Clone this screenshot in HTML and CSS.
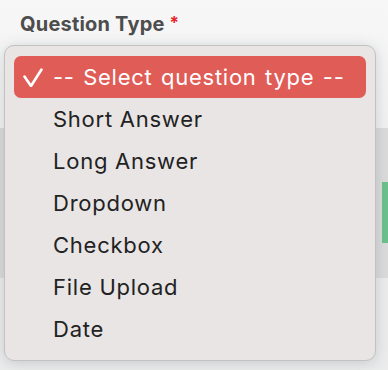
FILE: index.html
```html
<!DOCTYPE html>
<html lang="en">
<head>
  <meta charset="UTF-8" />
  <meta name="viewport" content="width=device-width, initial-scale=1.0" />
  <title>Question Type</title>
  <link rel="stylesheet" href="styles.css">
</head>

<body>
  <div class="field">
    <label class="field-label">Question Type <span class="req">*</span></label>
  </div>

  <div class="band">
    <div class="band-bar"></div>
  </div>

  <!-- native select popup, drawn open -->
  <div class="menu">
    <div class="option selected">
      <svg class="tick" width="20" height="20" viewBox="0 0 20 20">
        <path d="M1.5 9.5 L8 19 L18.5 2.5" fill="none" stroke="white" stroke-width="2.6" stroke-linecap="round" stroke-linejoin="round"/>
      </svg>
      <span>-- Select question type --</span>
    </div>
    <div class="option">Short Answer</div>
    <div class="option">Long Answer</div>
    <div class="option">Dropdown</div>
    <div class="option">Checkbox</div>
    <div class="option">File Upload</div>
    <div class="option">Date</div>
  </div>
</body>
</html>
```

FILE: styles.css
```css
body {
  margin: 0;
  font-family: Inter, "Liberation Sans", sans-serif;
  background: #ececec;
  height: 370px;
  overflow: hidden;
  position: relative;
}
.field {
  background: linear-gradient(#f7f7f7, #f1f1f1);
  height: 128px;
  padding: 12px 0 0 20px;
  box-sizing: border-box;
}
.field-label {
  font-size: 20px;
  font-weight: 700;
  color: #4d4d4d;
  letter-spacing: 0.2px;
}
.req {
  color: #e8262b;
  font-size: 17px;
  vertical-align: 2px;
}
.band {
  height: 150px;
  background: #dbdbdb;
  display: flex;
  justify-content: flex-end;
  padding-top: 54px;
  box-sizing: border-box;
}
.band-bar {
  width: 6px;
  height: 61px;
  background: #6cc18c;
}
.menu {
  position: absolute;
  left: 4px;
  top: 45px;
  width: 372px;
  box-sizing: border-box;
  padding: 10px 9px 10px 9px;
  background: #e8e5e4;
  border: 1px solid #c4c2c1;
  border-radius: 10px;
  box-shadow: 0 2px 14px rgba(60, 80, 100, 0.22);
}
.option {
  height: 42px;
  display: flex;
  align-items: center;
  padding-left: 39px;
  font-size: 22px;
  color: #222;
  letter-spacing: 0.75px;
}
.option.selected {
  background: #e05c57;
  color: #fff;
  border-radius: 7px;
  padding-left: 9px;
  gap: 10px;
  word-spacing: 1.5px;
}
.tick {
  flex: none;
}
```
